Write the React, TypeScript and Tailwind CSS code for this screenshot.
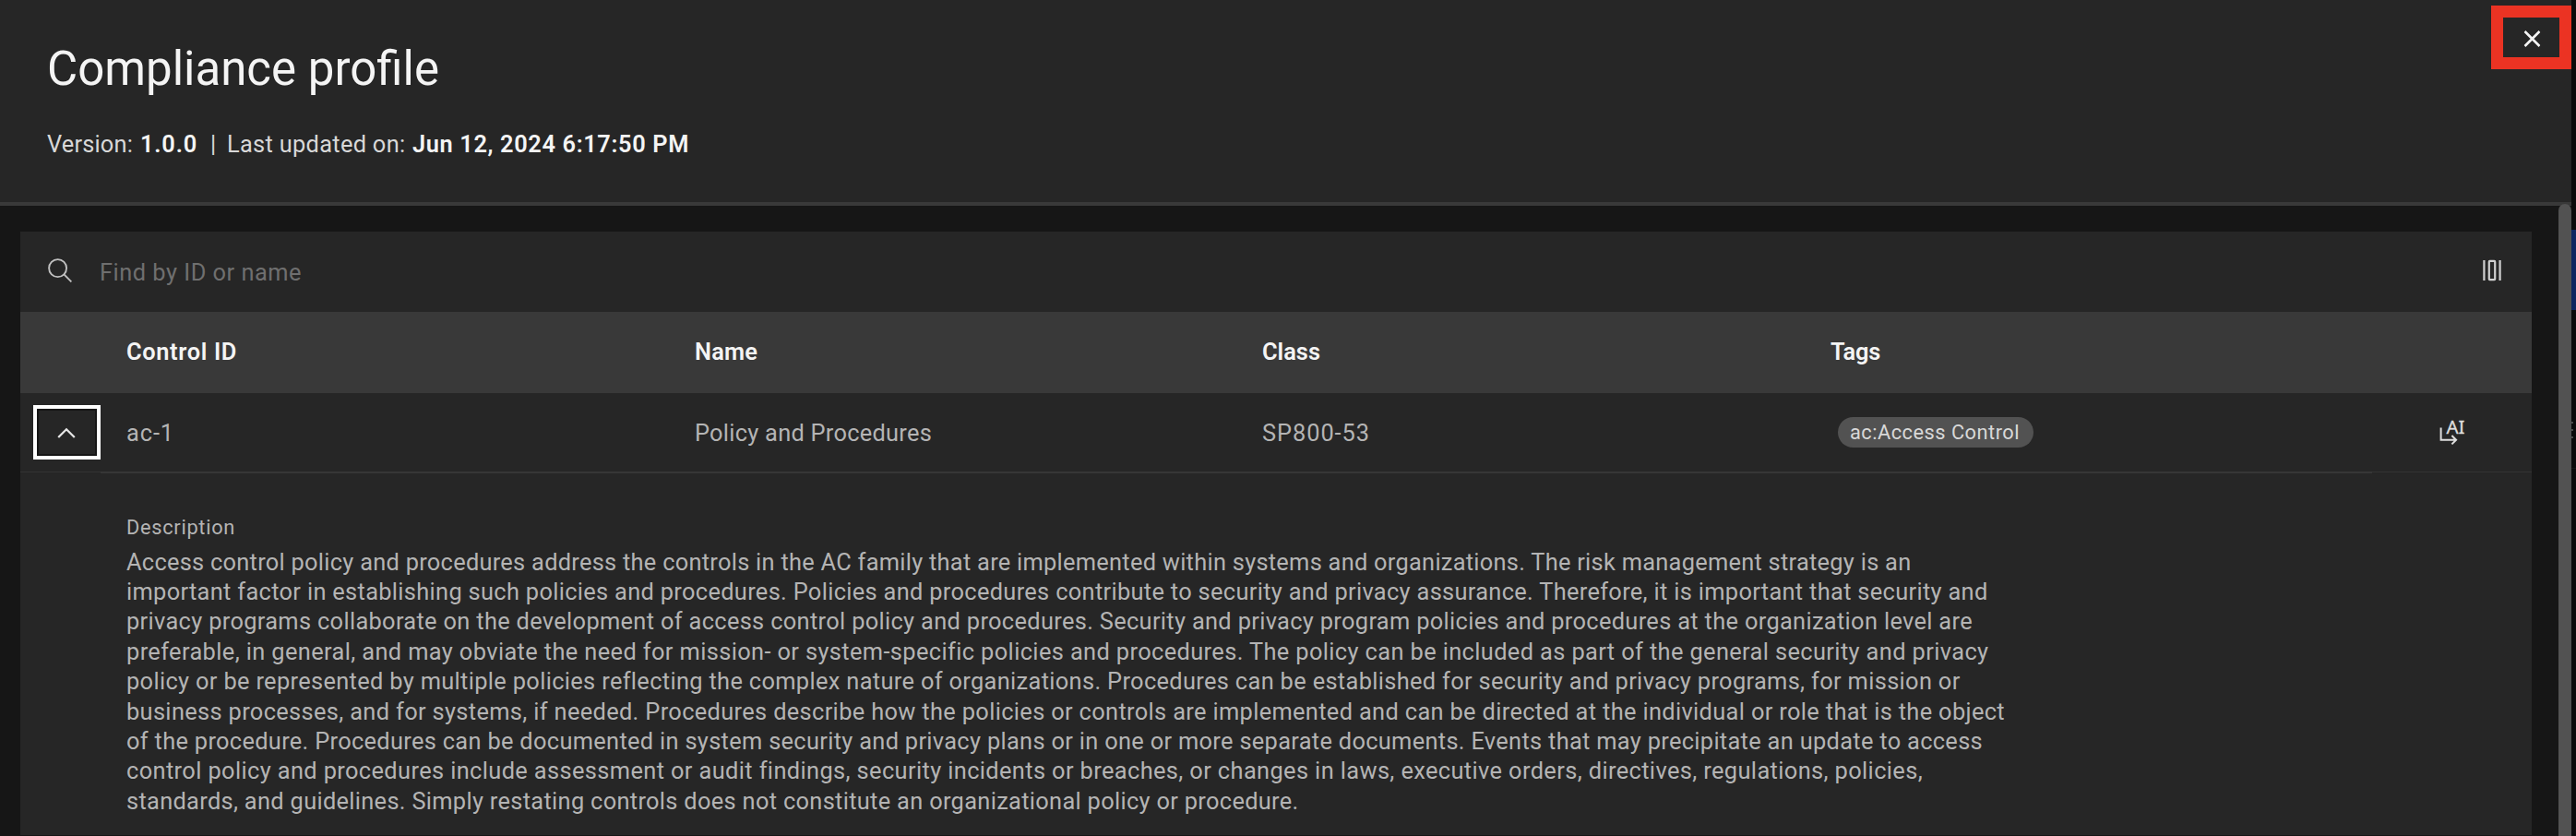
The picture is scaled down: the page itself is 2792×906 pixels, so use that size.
const description: { text: string; tracking: string }[] = [
  { text: "Access control policy and procedures address the controls in the AC family that are implemented within systems and organizations. The risk management strategy is an", tracking: "tracking-[0.27px]" },
  { text: "important factor in establishing such policies and procedures. Policies and procedures contribute to security and privacy assurance. Therefore, it is important that security and", tracking: "tracking-[0.316px]" },
  { text: "privacy programs collaborate on the development of access control policy and procedures. Security and privacy program policies and procedures at the organization level are", tracking: "tracking-[0.322px]" },
  { text: "preferable, in general, and may obviate the need for mission- or system-specific policies and procedures. The policy can be included as part of the general security and privacy", tracking: "tracking-[0.373px]" },
  { text: "policy or be represented by multiple policies reflecting the complex nature of organizations. Procedures can be established for security and privacy programs, for mission or", tracking: "tracking-[0.331px]" },
  { text: "business processes, and for systems, if needed. Procedures describe how the policies or controls are implemented and can be directed at the individual or role that is the object", tracking: "tracking-[0.337px]" },
  { text: "of the procedure. Procedures can be documented in system security and privacy plans or in one or more separate documents. Events that may precipitate an update to access", tracking: "tracking-[0.309px]" },
  { text: "control policy and procedures include assessment or audit findings, security incidents or breaches, or changes in laws, executive orders, directives, regulations, policies,", tracking: "tracking-[0.373px]" },
  { text: "standards, and guidelines. Simply restating controls does not constitute an organizational policy or procedure.", tracking: "tracking-[0.31px]" },
];

function Header() {
  return (
    <header className="flex h-[223px] shrink-0 items-start justify-between border-b-4 border-[#393939] bg-[#262626]">
      <div className="pl-[51px] pt-[43px]">
        <h1 className="text-[51px] leading-[64px] text-[#f4f4f4]">Compliance profile</h1>
        <p className="mt-[33px] flex whitespace-pre text-[25.4px] leading-8 text-[#d8d8d8]">
          <span className="w-[101px] tracking-[0.17px]">Version:</span>
          <b className="w-[76px] font-semibold tracking-[0.8px] text-[#f4f4f4]">1.0.0</b>
          <span className="w-[18px]">|</span>
          <span className="w-[201px] tracking-[0.3px]">Last updated on:</span>
          <b className="font-semibold tracking-[0.626px] text-[#f4f4f4]">Jun 12, 2024 6:17:50 PM</b>
        </p>
      </div>
      <button
        aria-label="Close"
        className="mt-1.5 flex h-[69px] w-[87px] items-center justify-center border-[13px] border-[#eb3323]"
      >
        <svg className="size-[18px] translate-x-[0.5px] translate-y-px" viewBox="0 0 18 18" fill="none" stroke="#f4f4f4" strokeWidth="2.6">
          <path d="M1 1l16 16M17 1L1 17" />
        </svg>
      </button>
    </header>
  );
}

function Toolbar() {
  return (
    <div className="flex h-[87px] items-center bg-[#262626] pl-[30px] pr-[33px]">
      <svg className="-mt-1 size-[26px]" viewBox="0 0 26 26" fill="none" stroke="#c0c0c0" strokeWidth="1.9">
        <circle cx="10.6" cy="10.6" r="9.5" />
        <path d="M17.4 17.4l8 8" />
      </svg>
      <span className="ml-[30px] flex-1 text-[25.4px] leading-8 tracking-[0.495px] text-[#6f6f6f]">Find by ID or name</span>
      <svg className="-mt-1 h-6 w-5" viewBox="0 0 20 24" fill="none" stroke="#d0d0d0" strokeWidth="2.2">
        <path d="M1.4 1v22M18.6 1v22" />
        <rect x="6.8" y="1.9" width="6.4" height="20.2" rx="0.8" />
      </svg>
    </div>
  );
}

function Table() {
  return (
    <div>
      <div className="grid h-[88px] grid-cols-[115px_616px_615px_616px_1fr] items-center bg-[#393939] pb-0.5 text-[25.4px] font-semibold leading-8 text-[#f4f4f4]">
        <span />
        <span className="tracking-[0.642px]">Control ID</span>
        <span className="tracking-[0.17px]">Name</span>
        <span>Class</span>
        <span className="tracking-[-0.24px]">Tags</span>
      </div>
      <div className="grid h-[87px] grid-cols-[87px_28px_616px_615px_616px_587px_1fr] items-start text-[25.4px] leading-8 text-[#b4b4b4] *:h-[87px] *:border-b-2 *:border-[#363636]">
        <div className="flex h-[86px]! items-start border-b! border-[#333]! pl-3.5 pt-[13px]">
          <button aria-label="Collapse row" className="flex h-[59px] w-[73px] items-center justify-center border-4 border-white shadow-[inset_0_0_0_2px_#161616]">
            <svg className="h-3 w-5 -translate-x-px" viewBox="0 0 20 12" fill="none" stroke="#e6e6e6" strokeWidth="2.3">
              <path d="M1.2 11L10 2.3l8.8 8.7" />
            </svg>
          </button>
        </div>
        <span />
        <span className="pt-[27px] tracking-[0.9px]">ac-1</span>
        <span className="pt-[27px] tracking-[0.257px]">Policy and Procedures</span>
        <span className="pt-[27px] tracking-[0.943px]">SP800-53</span>
        <div className="pl-2 pt-[26px]">
          <span className="flex h-[33px] w-[212px] items-center justify-center rounded-full bg-[#525252] pr-0.5 text-[21.8px] tracking-[0.486px] text-[#d8d8d8]">
            ac:Access Control
          </span>
        </div>
        <div className="h-[86px]! border-b! border-[#333]! pl-[71px] pt-[26px]">
          <svg className="h-8 w-8 overflow-visible" viewBox="0 0 32 32" fill="none" stroke="#dedede" strokeWidth="2">
            <path d="M3.6 11.500V24.700H20M15.400 20L20.100 24.700L15.400 29.400" />
            <text x="9.4" y="17.700" fontSize="19.5" fill="#dedede" stroke="#dedede" strokeWidth="0.3" textLength="20" lengthAdjust="spacingAndGlyphs" className="font-['Noto_Sans',sans-serif]">AI</text>
          </svg>
        </div>
      </div>
    </div>
  );
}

function Details() {
  return (
    <section className="pl-[115px] pt-[45px] text-[#b4b4b4]">
      <h2 className="h-[34.500px] text-[21.8px] leading-[28px] tracking-[0.696px]">Description</h2>
      <div className="whitespace-nowrap text-[25.4px] leading-[32.4px]">
        {description.map((line) => (
          <p key={line.text} className={line.tracking}>{line.text}</p>
        ))}
      </div>
    </section>
  );
}

export default function App() {
  return (
    <div className="flex h-[906px] w-[2792px] overflow-hidden bg-[#0b0b0b] font-[Roboto,'Noto_Sans',sans-serif]">
      <main className="flex w-[2787px] flex-col bg-[#161616]">
        <Header />
        <div className="flex min-h-0 flex-1 justify-between pl-[22px]">
          <div className="mb-px mt-7 w-[2722px] overflow-hidden bg-[#262626]">
            <Toolbar />
            <Table />
            <Details />
          </div>
          <div className="-mt-0.5 w-3.5 rounded-t-full bg-[#525252]" />
        </div>
      </main>
      <aside className="flex w-[5px] flex-col pt-[249px]">
        <div className="h-[87px] bg-[#0d2560]" />
        <div className="mt-[121px] flex flex-col gap-1.5">
          <i className="size-0.5 bg-[#4a4a4a]" />
          <i className="size-0.5 bg-[#4a4a4a]" />
          <i className="size-0.5 bg-[#4a4a4a]" />
        </div>
        <div className="mt-[32px] h-px bg-[#161616]" />
      </aside>
    </div>
  );
}
